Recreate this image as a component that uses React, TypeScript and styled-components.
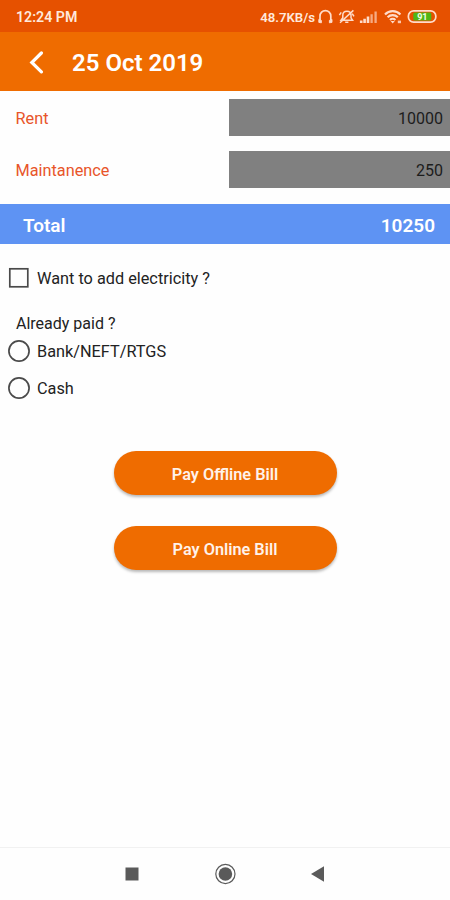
import React from "react";
import styled, { createGlobalStyle } from "styled-components";

const GlobalStyle = createGlobalStyle`
  *, *::before, *::after { box-sizing: border-box; }
  body { margin: 0; background: #fff; }
  button, input { font: inherit; }
`;

const Screen = styled.div`
  width: 450px;
  height: 900px;
  display: flex;
  flex-direction: column;
  background: #fefefe;
  color: #222;
  font-family: Roboto, sans-serif;
  font-size: 16.3px;
  overflow: hidden;
`;

const StatusBar = styled.div`
  height: 32px;
  flex: none;
  display: flex;
  align-items: center;
  justify-content: space-between;
  padding: 2px 13px 0 16px;
  background: #e65100;
  color: #ffe9dc;
  font-size: 14.2px;
  font-weight: 600;
`;

const StatusGroup = styled.div`
  display: flex;
  align-items: center;
  gap: 2px;
  font-size: 13.2px;
`;

const Header = styled.header`
  height: 59px;
  flex: none;
  display: flex;
  align-items: center;
  padding: 3px 28px 0;
  gap: 28px;
  background: #ef6c00;
  color: #fff;
`;

const Title = styled.h1`
  margin: 0;
  font-size: 24px;
  font-weight: 600;
  line-height: 28px;
`;

const BackButton = styled.button`
  display: flex;
  width: 16px;
  height: 24px;
  padding: 0;
  border: 0;
  background: none;
  color: inherit;
`;

const Charges = styled.section`
  display: grid;
  gap: 15px;
  padding: 8px 0 16px;
`;

const ChargeRow = styled.div`
  display: grid;
  grid-template-columns: 229px 221px;
  height: 37px;
  align-items: center;
`;

const ChargeLabel = styled.span`
  padding: 2px 0 0 15.5px;
  color: #e8552a;
`;

const ChargeValue = styled.span`
  height: 37px;
  padding-right: 7px;
  background: #808080;
  color: #1c1c1c;
  font-size: 16px;
  line-height: 40px;
  text-align: right;
`;

const TotalRow = styled.div`
  height: 40px;
  flex: none;
  display: flex;
  align-items: center;
  justify-content: space-between;
  padding: 2px 15px 0 23px;
  background: #5e93f3;
  color: #fff;
  font-size: 19px;
  font-weight: 600;
`;

const Options = styled.section`
  display: flex;
  flex-direction: column;
  padding: 23px 8px 0;
`;

const Option = styled.label<{ $height: number }>`
  display: flex;
  align-items: center;
  gap: 7px;
  height: ${(p) => p.$height}px;
`;

const OptionIcon = styled.svg`
  width: 22px;
  height: 22px;
  flex: none;
  fill: none;
  stroke: #4a4a4a;
  stroke-width: 1.7;
`;

const Text = styled.span`
  padding-top: 1px;
  white-space: nowrap;
`;

const Question = styled.p`
  margin: 24px 0 -3px 8px;
  font-size: 16px;
  line-height: 22px;
`;

const Actions = styled.section`
  display: flex;
  flex-direction: column;
  align-items: center;
  gap: 31px;
  padding-top: 45px;
`;

const PayButton = styled.button`
  width: 223px;
  height: 44px;
  padding: 2px 0 0;
  border: 0;
  border-radius: 22px;
  background: #ef6c00;
  color: #fff2ea;
  font-size: 16.3px;
  font-weight: 600;
  box-shadow: 0 2px 3px rgba(0, 0, 0, 0.28);
`;

const NavBar = styled.nav`
  height: 53px;
  flex: none;
  display: flex;
  align-items: center;
  justify-content: space-between;
  margin-top: auto;
  padding: 0 121px;
  border-top: 1px solid #f1f1f1;
  color: #5a5a5a;
`;

const StatusIcons = () => (
  <svg width="120" height="20" viewBox="0 0 120 20" fill="none" stroke="#ffdcca" strokeWidth="1.5">
    <path d="M3 13V9a5.4 5.4 0 0 1 10.8 0v4" strokeWidth="1.7" />
    <path d="M1.8 12.4l2.6 1v2.4l-2.6-.4zM15 12.4l-2.6 1v2.4l2.6-.4z" fill="#ffdcca" strokeWidth="0.9" />
    <path d="M24 13.2h11.6L34 10.8V8.2c0-5.4-8.2-5.4-8.2 0v2.6zM28.2 15.2h3.2M23 15.8L36.4 3.4M22.4 8.2l1.8-2.8M35.2 6.6l1.8 2.8" strokeWidth="1.5" />
    <path d="M44.2 16v-2.6M47.6 16v-4.2M51 16V9.5" strokeWidth="2.6" />
    <path d="M54.6 16V7.3M58.6 16V4.5" strokeWidth="2.3" opacity="0.65" />
    <path d="M68 7.4a10.8 10.8 0 0 1 15.4 0M70.6 10.3a7.2 7.2 0 0 1 10.2 0M73 13a3.9 3.9 0 0 1 5.4 0" strokeWidth="2.2" />
    <path d="M75.7 16.6l-2.1-2.5h4.2z" fill="#ffdcca" stroke="none" />
    <rect x="80.8" y="13.6" width="3.2" height="2.6" fill="#ffdcca" stroke="none" opacity="0.85" />
    <rect x="91.4" y="3.9" width="27.4" height="11.2" rx="5.2" strokeWidth="1.7" />
    <rect x="96.3" y="5.4" width="18" height="8.2" rx="1.5" fill="#4fb615" stroke="none" />
    <text x="105.3" y="12.8" textAnchor="middle" fontFamily="Roboto, sans-serif" fontSize="9" fontWeight="700" fill="#f5ffe9" stroke="none">91</text>
  </svg>
);

const charges = [
  { name: "Rent", amount: 10000 },
  { name: "Maintanence", amount: 250 },
];
const methods = ["Bank/NEFT/RTGS", "Cash"];

export default function App() {
  return (
    <>
      <GlobalStyle />
      <Screen>
        <StatusBar>
          <span>12:24 PM</span>
          <StatusGroup>
            <span>48.7KB/s</span>
            <StatusIcons />
          </StatusGroup>
        </StatusBar>
        <Header>
          <BackButton aria-label="Back">
            <svg width="16" height="24" viewBox="0 0 16 24" fill="none" stroke="currentColor" strokeWidth="3.2" strokeLinecap="round">
              <path d="M13.4 2L3.8 11.5l9.6 9.4" />
            </svg>
          </BackButton>
          <Title>25 Oct 2019</Title>
        </Header>
        <Charges>
          {charges.map((c) => (
            <ChargeRow key={c.name}>
              <ChargeLabel>{c.name}</ChargeLabel>
              <ChargeValue>{c.amount}</ChargeValue>
            </ChargeRow>
          ))}
        </Charges>
        <TotalRow>
          <span>Total</span>
          <span>10250</span>
        </TotalRow>
        <Options>
          <Option $height={22}>
            <OptionIcon viewBox="0 0 22 22">
              <rect x="1.8" y="1.8" width="18" height="18" />
            </OptionIcon>
            <Text>Want to add electricity ?</Text>
          </Option>
          <Question>Already paid ?</Question>
          {methods.map((m) => (
            <Option key={m} $height={37}>
              <OptionIcon viewBox="0 0 22 22">
                <circle cx="11" cy="11" r="10.1" />
              </OptionIcon>
              <Text>{m}</Text>
            </Option>
          ))}
        </Options>
        <Actions>
          <PayButton>Pay Offline Bill</PayButton>
          <PayButton>Pay Online Bill</PayButton>
        </Actions>
        <NavBar>
          <svg width="22" height="22" viewBox="0 0 22 22">
            <rect x="4.5" y="4.5" width="13" height="13" fill="currentColor" />
          </svg>
          <svg width="22" height="22" viewBox="0 0 22 22">
            <circle cx="11.4" cy="11" r="9.6" fill="none" stroke="currentColor" strokeWidth="1.2" />
            <circle cx="11.4" cy="11" r="6.8" fill="currentColor" />
          </svg>
          <svg width="22" height="22" viewBox="0 0 22 22">
            <path d="M4 11l13-7.8v15.6z" fill="currentColor" />
          </svg>
        </NavBar>
      </Screen>
    </>
  );
}
